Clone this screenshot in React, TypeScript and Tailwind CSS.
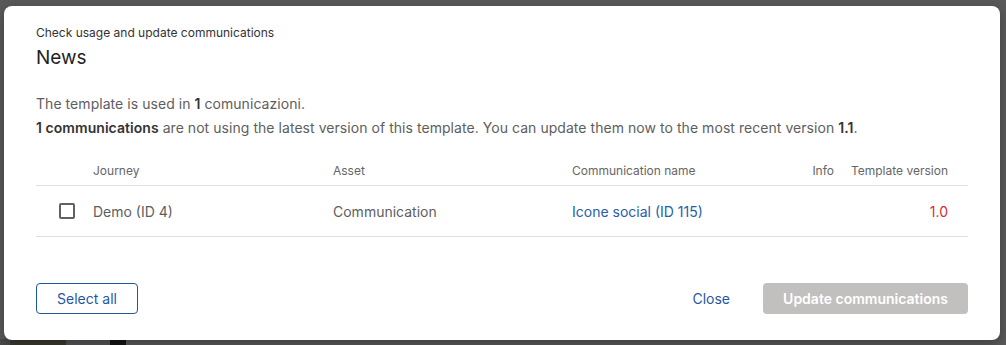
import React from "react";

export default function App() {
  return (
    <div
      className="w-[1006px] h-[345px] bg-[#595959] relative overflow-hidden"
      style={{ fontFamily: "Inter, 'Noto Sans', sans-serif" }}
    >
      {/* backdrop bits */}
      <div className="absolute left-0 bottom-0 w-full h-[6px] flex">
        <div className="w-[10px] bg-[#4a4a4a]" />
        <div className="w-[56px] bg-[#3a3a30]" />
        <div className="w-[44px] bg-[#555]" />
        <div className="w-[16px] bg-[#151515]" />
        <div className="flex-1 bg-[#5a5a5a]" />
      </div>
      <div className="absolute left-[4px] top-[6px] w-[996px] h-[334px] bg-white rounded-[8px] shadow-[0_4px_12px_rgba(0,0,0,0.3)] px-8 pt-[19px] flex flex-col">
        <div className="text-[12px] leading-[16px] text-[#333]">Check usage and update communications</div>
        <div className="mt-[3px] text-[19px] leading-[28px] text-[#1f1f1f]">News</div>
        <div className="mt-[20px] text-[14px] leading-[24px] text-[#5e5e5e] tracking-[0.05px]">
          <div>
            The template is used in <b className="font-semibold text-[#333]">1</b> comunicazioni.
          </div>
          <div>
            <b className="font-semibold text-[#333]">1 communications</b> are not using the latest version of this template. You can update them now to the most recent version <b className="font-semibold text-[#333]">1.1</b>.
          </div>
        </div>
        <div className="mt-[16px]">
          <div className="flex h-[30px] items-center border-b border-[#e0e0e0] text-[12px] text-[#666]">
            <div className="w-[57px]" />
            <div className="w-[240px]">Journey</div>
            <div className="w-[239px]">Asset</div>
            <div className="flex-1">Communication name</div>
            <div className="w-[24px] text-right">Info</div>
            <div className="w-[114px] text-right">Template version</div>
            <div className="w-[20px]" />
          </div>
          <div className="flex h-[51px] items-center border-b border-[#e0e0e0] text-[14px] text-[#5e5e5e]">
            <div className="w-[57px] pl-[23px] flex items-center">
              <div className="w-[16px] h-[16px] border-2 border-[#616161] rounded-[2px]" />
            </div>
            <div className="w-[240px]">Demo (ID 4)</div>
            <div className="w-[239px]">Communication</div>
            <div className="flex-1 text-[#2760a8]">Icone social (ID 115)</div>
            <div className="w-[24px]" />
            <div className="w-[114px] text-right text-[#d32f2f]">1.0</div>
            <div className="w-[20px]" />
          </div>
        </div>
        <div className="mt-[46px] flex items-center">
          <button className="w-[102px] h-[31px] border border-[#1f58a0] rounded-[4px] text-[14px] text-[#1f58a0]">
            Select all
          </button>
          <div className="flex-1" />
          <button className="text-[14px] text-[#1f58a0] mr-[33px]">Close</button>
          <button className="w-[205px] h-[31px] rounded-[4px] bg-[#c2bfbf] text-[14px] font-semibold text-white">
            Update communications
          </button>
        </div>
      </div>
    </div>
  );
}
